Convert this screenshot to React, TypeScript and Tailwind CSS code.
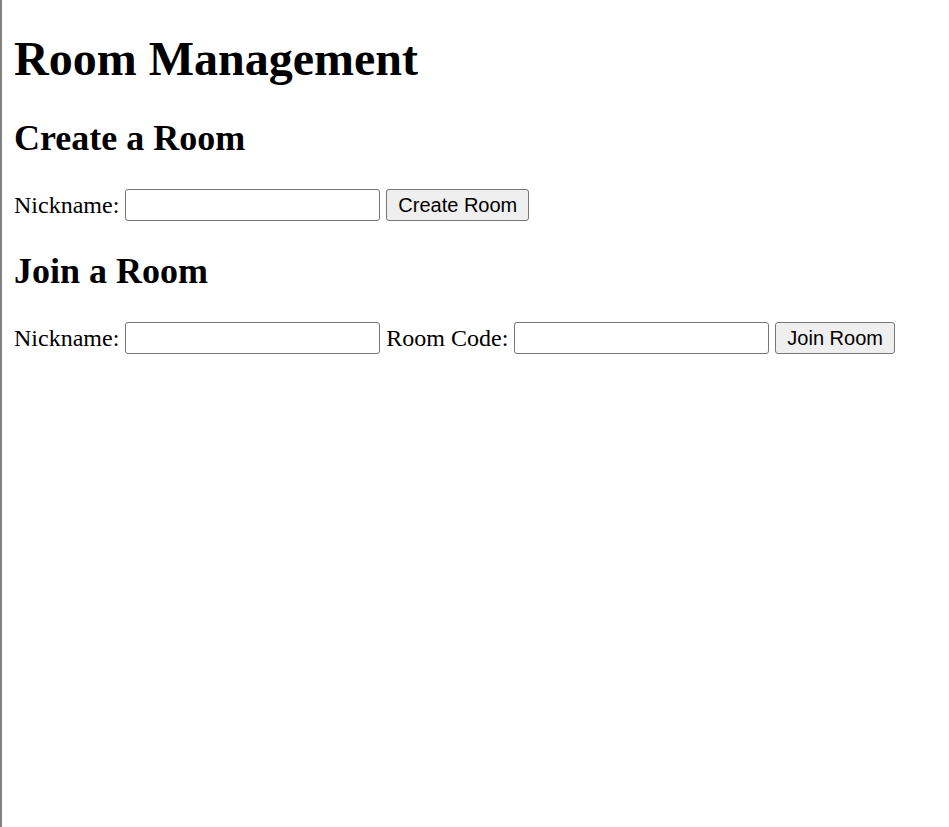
const Field = () => (
  <input
    type="text"
    className="w-[255px] h-[32px] border border-[#767676] rounded-[3px] bg-white px-[3px] text-[20px] font-['Liberation_Sans',sans-serif] outline-none"
  />
);

const Btn = ({ label }: { label: string }) => (
  <button className="h-[32px] px-[11px] bg-[#efefef] border border-[#767676] rounded-[3px] text-[20px] leading-none text-black font-['Liberation_Sans',Arial,sans-serif]">
    {label}
  </button>
);

export default function App() {
  return (
    <div className="min-h-screen bg-white border-l-2 border-[#808080] pl-[12px] pt-[32px] text-black font-['Liberation_Serif','Times_New_Roman',serif]">
      {/* Title */}
      <h1 className="text-[48px] leading-[54px] font-bold">Room Management</h1>

      {/* Create */}
      <h2 className="mt-[32px] mb-[30px] text-[36px] leading-[40px] font-bold">
        Create a Room
      </h2>
      <div className="flex items-center gap-[6px] h-[33px] text-[24px]">
        <span>Nickname:</span>
        <Field />
        <Btn label="Create Room" />
      </div>

      {/* Join */}
      <h2 className="mt-[30px] mb-[30px] text-[36px] leading-[40px] font-bold">
        Join a Room
      </h2>
      <div className="flex items-center gap-[6px] h-[33px] text-[24px]">
        <span>Nickname:</span>
        <Field />
        <span>Room Code:</span>
        <Field />
        <Btn label="Join Room" />
      </div>
    </div>
  );
}
